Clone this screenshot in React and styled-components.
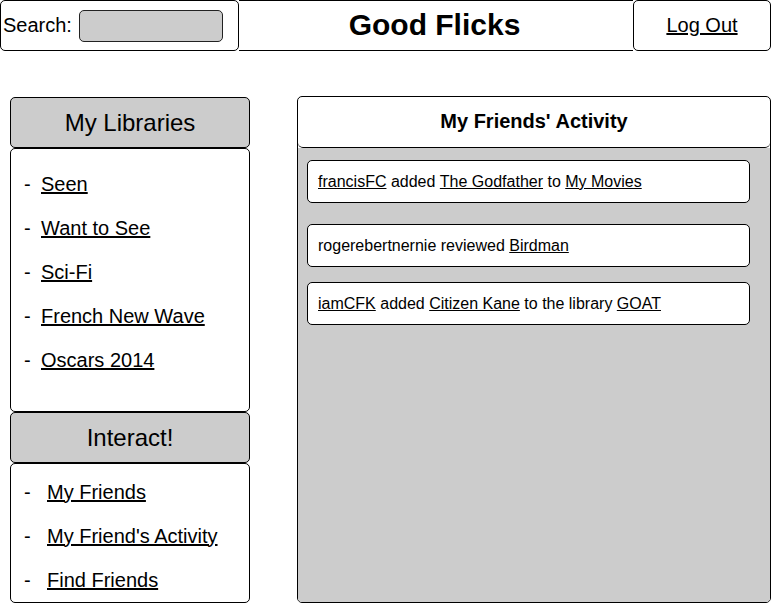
import React from "react";
import styled, { createGlobalStyle } from "styled-components";

const GlobalStyle = createGlobalStyle`
  body {
    margin: 0;
    background: #fff;
    font-family: "Liberation Sans", Arial, sans-serif;
    color: #000;
  }
  a {
    color: #000;
    text-decoration: underline;
  }
`;

const libraries = ["Seen", "Want to See", "Sci-Fi", "French New Wave", "Oscars 2014"];
const interact = ["My Friends", "My Friend's Activity", "Find Friends"];

const App = () => {
  return (
    <Page>
      <GlobalStyle />
      <Header>
        <SearchBox>
          <label htmlFor="search">Search:</label>
          <SearchInput id="search" />
        </SearchBox>
        <Title>Good Flicks</Title>
        <LogOutBox>
          <a href="#logout">Log Out</a>
        </LogOutBox>
      </Header>

      <Main>
        <Sidebar>
          <SectionHead>My Libraries</SectionHead>
          <LinkList $height={264} $top={13}>
            {libraries.map((name) => (
              <LinkItem key={name} $indent={9}>
                <span>-</span>
                <a href="#lib">{name}</a>
              </LinkItem>
            ))}
          </LinkList>
          <SectionHead>Interact!</SectionHead>
          <LinkList $height={140} $top={6}>
            {interact.map((name) => (
              <LinkItem key={name} $indent={15}>
                <span>-</span>
                <a href="#friends">{name}</a>
              </LinkItem>
            ))}
          </LinkList>
        </Sidebar>

        <ActivityPanel>
          <ActivityHead>My Friends' Activity</ActivityHead>
          <ActivityBody>
            <Card>
              <a href="#u">francisFC</a>&nbsp;added&nbsp;<a href="#m">The Godfather</a>
              &nbsp;to&nbsp;<a href="#l">My Movies</a>
            </Card>
            <Card $space={21}>
              rogerebertnernie reviewed&nbsp;<a href="#m">Birdman</a>
            </Card>
            <Card $space={15}>
              <a href="#u">iamCFK</a>&nbsp;added&nbsp;<a href="#m">Citizen Kane</a>
              &nbsp;to the library&nbsp;<a href="#l">GOAT</a>
            </Card>
          </ActivityBody>
        </ActivityPanel>
      </Main>
    </Page>
  );
};

const Page = styled.div`
  width: 771px;
  height: 603px;
  overflow: hidden;
`;

const Header = styled.header`
  display: flex;
  height: 51px;
`;

const SearchBox = styled.div`
  width: 239px;
  box-sizing: border-box;
  border: 1px solid #000;
  border-radius: 5px;
  display: flex;
  align-items: center;
  padding-left: 2px;
  font-size: 20px;
  label {
    margin-right: 7px;
  }
`;

const SearchInput = styled.div`
  width: 144px;
  height: 32px;
  box-sizing: border-box;
  background: #ccc;
  border: 1px solid #222;
  border-radius: 5px;
`;

const Title = styled.h1`
  flex: 1;
  margin: 0;
  box-sizing: border-box;
  border-top: 1px solid #000;
  border-bottom: 1px solid #000;
  display: flex;
  align-items: center;
  justify-content: center;
  font-size: 30px;
  font-weight: bold;
  padding: 0 3px 1px 0;
`;

const LogOutBox = styled.div`
  width: 138px;
  box-sizing: border-box;
  border: 1px solid #000;
  border-radius: 5px;
  display: flex;
  align-items: center;
  justify-content: center;
  font-size: 20px;
  padding-bottom: 1px;
`;

const Main = styled.main`
  display: flex;
  align-items: flex-start;
  gap: 47px;
  padding: 45px 0 0 10px;
`;

const Sidebar = styled.aside`
  width: 240px;
  display: flex;
  flex-direction: column;
  margin-top: 1px;
`;

const SectionHead = styled.h2`
  margin: 0;
  height: 51px;
  box-sizing: border-box;
  background: #ccc;
  border: 1px solid #000;
  border-radius: 5px;
  display: flex;
  align-items: center;
  justify-content: center;
  font-size: 24px;
  font-weight: normal;
`;

const LinkList = styled.ul`
  list-style: none;
  margin: 0;
  height: ${(p) => p.$height}px;
  box-sizing: border-box;
  padding: ${(p) => p.$top}px 0 0 13px;
  border: 1px solid #000;
  border-radius: 5px;
`;

const LinkItem = styled.li`
  display: flex;
  align-items: center;
  height: 44px;
  font-size: 20px;
  span {
    width: ${(p) => p.$indent + 8}px;
  }
`;

const ActivityPanel = styled.section`
  width: 474px;
  height: 507px;
  box-sizing: border-box;
  border: 1px solid #000;
  border-radius: 5px;
  overflow: hidden;
  display: flex;
  flex-direction: column;
`;

const ActivityHead = styled.h2`
  margin: 0;
  height: 51px;
  flex-shrink: 0;
  box-sizing: border-box;
  border-bottom: 1px solid #000;
  border-radius: 0 0 5px 5px;
  display: flex;
  align-items: center;
  justify-content: center;
  font-size: 20px;
  font-weight: bold;
  padding-bottom: 1px;
`;

const ActivityBody = styled.div`
  flex: 1;
  background: #ccc;
  padding: 12px 20px 0 9px;
  display: flex;
  flex-direction: column;
`;

const Card = styled.div`
  height: 43px;
  box-sizing: border-box;
  margin-top: ${(p) => p.$space || 0}px;
  background: #fff;
  border: 1px solid #000;
  border-radius: 5px;
  display: flex;
  align-items: center;
  padding-left: 10px;
  font-size: 16px;
  white-space: nowrap;
`;

export default App;
